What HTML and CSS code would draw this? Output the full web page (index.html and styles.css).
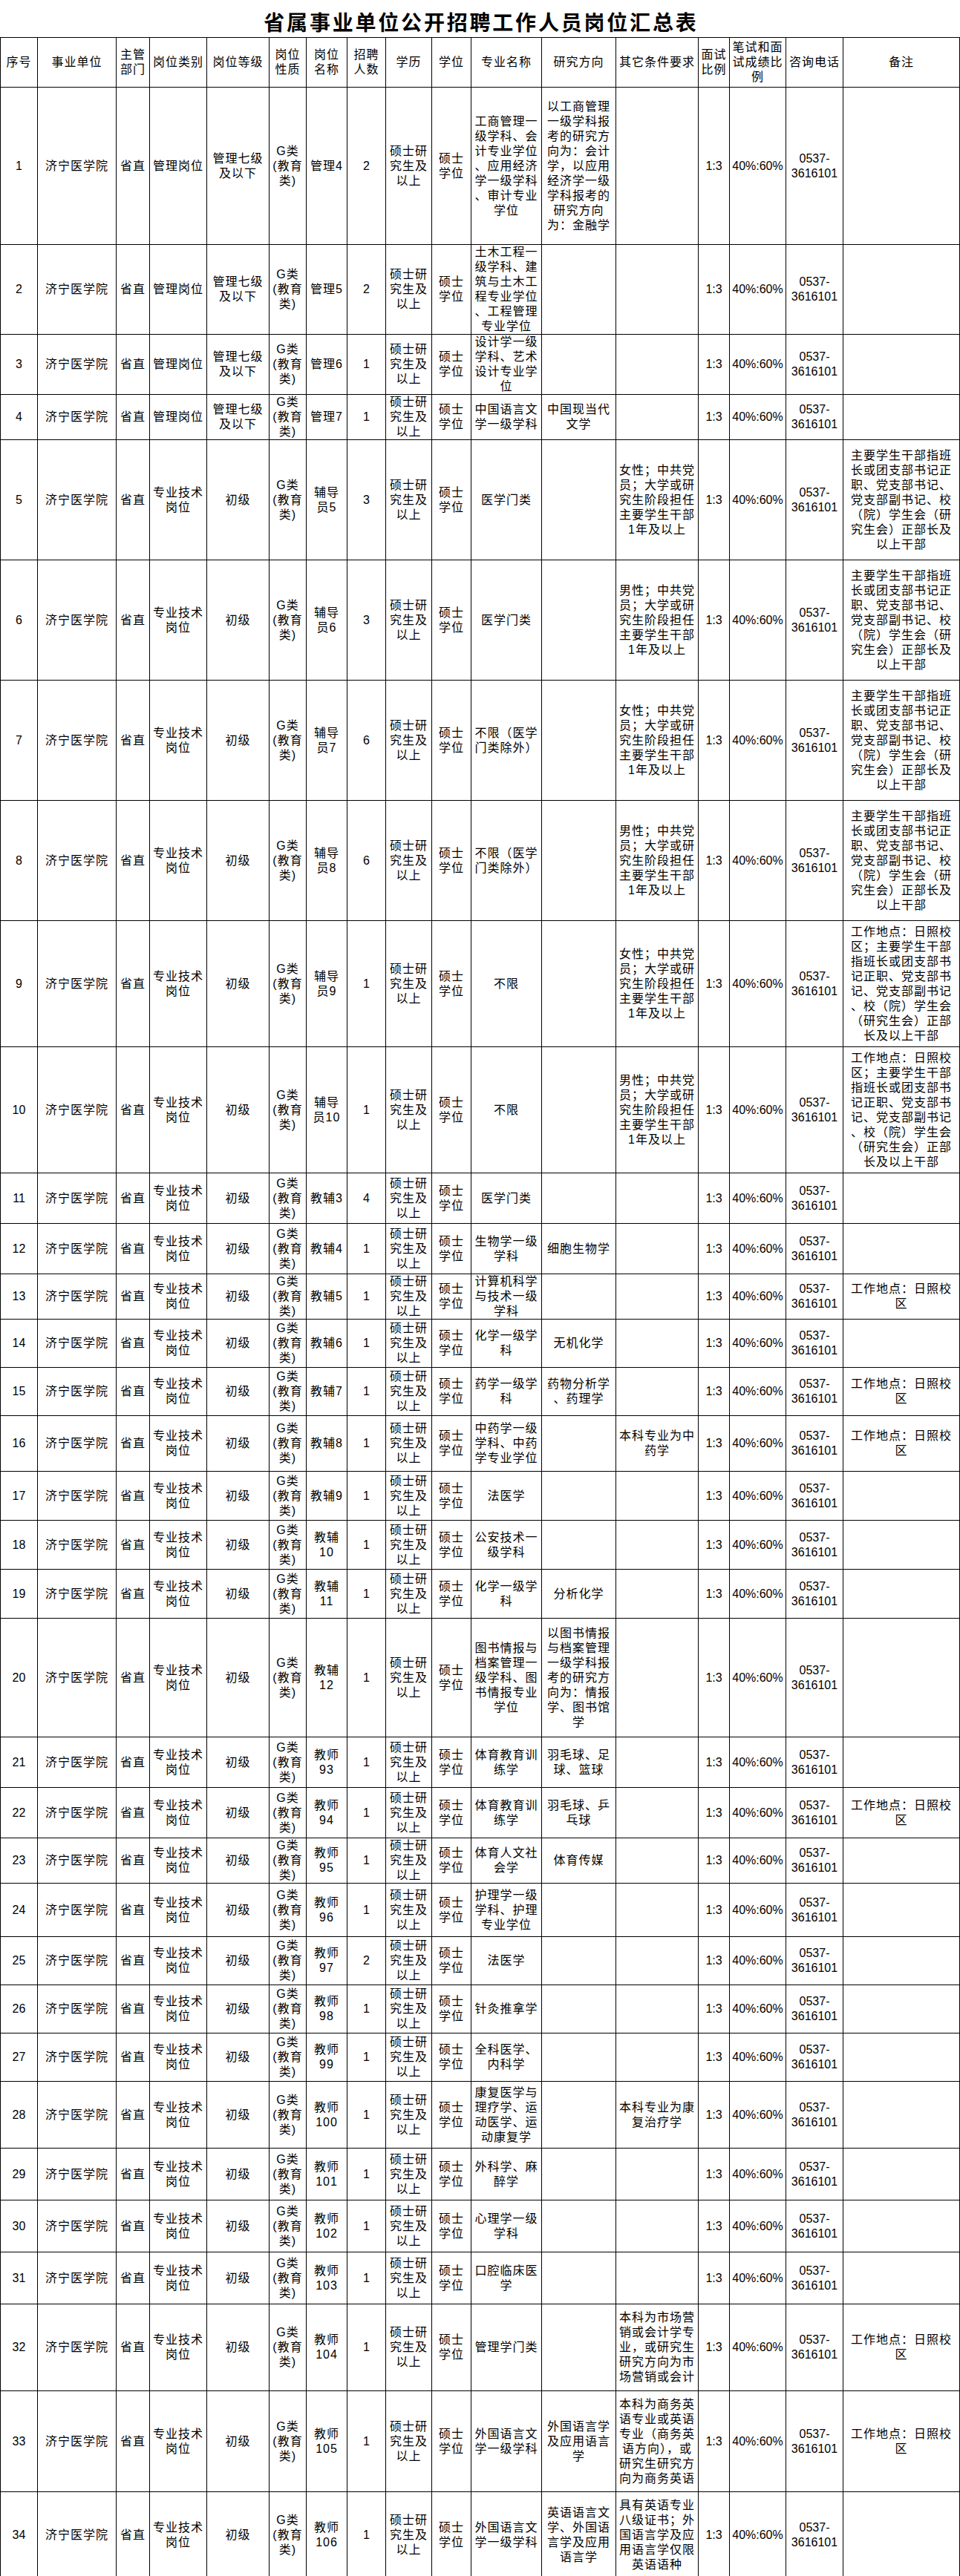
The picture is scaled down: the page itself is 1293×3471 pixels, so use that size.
FILE: index.html
```html
<!DOCTYPE html>
<html lang="zh-CN">
<head>
<meta charset="utf-8">
<title>省属事业单位公开招聘工作人员岗位汇总表</title>
<link rel="stylesheet" href="styles.css">
</head>
<body>
<div class="title">省属事业单位公开招聘工作人员岗位汇总表</div>
<table class="sheet">
<colgroup>
<col class="w1"><col class="w2"><col class="w3"><col class="w4"><col class="w5"><col class="w6"><col class="w7"><col class="w8"><col class="w9"><col class="w10"><col class="w11"><col class="w12"><col class="w13"><col class="w14"><col class="w15"><col class="w16"><col class="w17">
</colgroup>
<thead>
<tr class="h67"><th>序号</th><th>事业单位</th><th>主管部门</th><th>岗位类别</th><th>岗位等级</th><th>岗位性质</th><th>岗位名称</th><th>招聘人数</th><th>学历</th><th>学位</th><th>专业名称</th><th>研究方向</th><th>其它条件要求</th><th>面试比例</th><th>笔试和面试成绩比例</th><th>咨询电话</th><th>备注</th></tr>
</thead>
<tbody>
<tr class="h212"><td class="num">1</td><td>济宁医学院</td><td>省直</td><td>管理岗位</td><td>管理七级及以下</td><td>G类(教育类)</td><td>管理4</td><td class="num">2</td><td>硕士研究生及以上</td><td>硕士学位</td><td class="tx">工商管理一级学科、会计专业学位、应用经济学一级学科、审计专业学位</td><td class="tx">以工商管理一级学科报考的研究方向为：会计学，以应用经济学一级学科报考的研究方向<br>为：金融学</td><td class="tx"></td><td class="num">1:3</td><td class="num">40%:60%</td><td class="num">0537-<br>3616101</td><td class="tx"></td></tr>
<tr class="h120"><td class="num">2</td><td>济宁医学院</td><td>省直</td><td>管理岗位</td><td>管理七级及以下</td><td>G类(教育类)</td><td>管理5</td><td class="num">2</td><td>硕士研究生及以上</td><td>硕士学位</td><td class="tx">土木工程一级学科、建筑与土木工程专业学位、工程管理专业学位</td><td class="tx"></td><td class="tx"></td><td class="num">1:3</td><td class="num">40%:60%</td><td class="num">0537-<br>3616101</td><td class="tx"></td></tr>
<tr class="h80"><td class="num">3</td><td>济宁医学院</td><td>省直</td><td>管理岗位</td><td>管理七级及以下</td><td>G类(教育类)</td><td>管理6</td><td class="num">1</td><td>硕士研究生及以上</td><td>硕士学位</td><td class="tx">设计学一级学科、艺术设计专业学位</td><td class="tx"></td><td class="tx"></td><td class="num">1:3</td><td class="num">40%:60%</td><td class="num">0537-<br>3616101</td><td class="tx"></td></tr>
<tr class="h61"><td class="num">4</td><td>济宁医学院</td><td>省直</td><td>管理岗位</td><td>管理七级及以下</td><td>G类(教育类)</td><td>管理7</td><td class="num">1</td><td>硕士研究生及以上</td><td>硕士学位</td><td class="tx">中国语言文学一级学科</td><td class="tx">中国现当代文学</td><td class="tx"></td><td class="num">1:3</td><td class="num">40%:60%</td><td class="num">0537-<br>3616101</td><td class="tx"></td></tr>
<tr class="h162"><td class="num">5</td><td>济宁医学院</td><td>省直</td><td>专业技术岗位</td><td>初级</td><td>G类(教育类)</td><td>辅导员5</td><td class="num">3</td><td>硕士研究生及以上</td><td>硕士学位</td><td class="tx">医学门类</td><td class="tx"></td><td class="tx">女性；中共党员；大学或研究生阶段担任主要学生干部1年及以上</td><td class="num">1:3</td><td class="num">40%:60%</td><td class="num">0537-<br>3616101</td><td class="tx">主要学生干部指班长或团支部书记正职、党支部书记、党支部副书记、校（院）学生会（研究生会）正部长及以上干部</td></tr>
<tr class="h162"><td class="num">6</td><td>济宁医学院</td><td>省直</td><td>专业技术岗位</td><td>初级</td><td>G类(教育类)</td><td>辅导员6</td><td class="num">3</td><td>硕士研究生及以上</td><td>硕士学位</td><td class="tx">医学门类</td><td class="tx"></td><td class="tx">男性；中共党员；大学或研究生阶段担任主要学生干部1年及以上</td><td class="num">1:3</td><td class="num">40%:60%</td><td class="num">0537-<br>3616101</td><td class="tx">主要学生干部指班长或团支部书记正职、党支部书记、党支部副书记、校（院）学生会（研究生会）正部长及以上干部</td></tr>
<tr class="h162"><td class="num">7</td><td>济宁医学院</td><td>省直</td><td>专业技术岗位</td><td>初级</td><td>G类(教育类)</td><td>辅导员7</td><td class="num">6</td><td>硕士研究生及以上</td><td>硕士学位</td><td class="tx">不限（医学门类除外）</td><td class="tx"></td><td class="tx">女性；中共党员；大学或研究生阶段担任主要学生干部1年及以上</td><td class="num">1:3</td><td class="num">40%:60%</td><td class="num">0537-<br>3616101</td><td class="tx">主要学生干部指班长或团支部书记正职、党支部书记、党支部副书记、校（院）学生会（研究生会）正部长及以上干部</td></tr>
<tr class="h162"><td class="num">8</td><td>济宁医学院</td><td>省直</td><td>专业技术岗位</td><td>初级</td><td>G类(教育类)</td><td>辅导员8</td><td class="num">6</td><td>硕士研究生及以上</td><td>硕士学位</td><td class="tx">不限（医学门类除外）</td><td class="tx"></td><td class="tx">男性；中共党员；大学或研究生阶段担任主要学生干部1年及以上</td><td class="num">1:3</td><td class="num">40%:60%</td><td class="num">0537-<br>3616101</td><td class="tx">主要学生干部指班长或团支部书记正职、党支部书记、党支部副书记、校（院）学生会（研究生会）正部长及以上干部</td></tr>
<tr class="h170"><td class="num">9</td><td>济宁医学院</td><td>省直</td><td>专业技术岗位</td><td>初级</td><td>G类(教育类)</td><td>辅导员9</td><td class="num">1</td><td>硕士研究生及以上</td><td>硕士学位</td><td class="tx">不限</td><td class="tx"></td><td class="tx">女性；中共党员；大学或研究生阶段担任主要学生干部1年及以上</td><td class="num">1:3</td><td class="num">40%:60%</td><td class="num">0537-<br>3616101</td><td class="tx">工作地点：日照校区；主要学生干部指班长或团支部书记正职、党支部书记、党支部副书记、校（院）学生会（研究生会）正部长及以上干部</td></tr>
<tr class="h170"><td class="num">10</td><td>济宁医学院</td><td>省直</td><td>专业技术岗位</td><td>初级</td><td>G类(教育类)</td><td>辅导员10</td><td class="num">1</td><td>硕士研究生及以上</td><td>硕士学位</td><td class="tx">不限</td><td class="tx"></td><td class="tx">男性；中共党员；大学或研究生阶段担任主要学生干部1年及以上</td><td class="num">1:3</td><td class="num">40%:60%</td><td class="num">0537-<br>3616101</td><td class="tx">工作地点：日照校区；主要学生干部指班长或团支部书记正职、党支部书记、党支部副书记、校（院）学生会（研究生会）正部长及以上干部</td></tr>
<tr class="h68"><td class="num">11</td><td>济宁医学院</td><td>省直</td><td>专业技术岗位</td><td>初级</td><td>G类(教育类)</td><td>教辅3</td><td class="num">4</td><td>硕士研究生及以上</td><td>硕士学位</td><td class="tx">医学门类</td><td class="tx"></td><td class="tx"></td><td class="num">1:3</td><td class="num">40%:60%</td><td class="num">0537-<br>3616101</td><td class="tx"></td></tr>
<tr class="h68"><td class="num">12</td><td>济宁医学院</td><td>省直</td><td>专业技术岗位</td><td>初级</td><td>G类(教育类)</td><td>教辅4</td><td class="num">1</td><td>硕士研究生及以上</td><td>硕士学位</td><td class="tx">生物学一级学科</td><td class="tx">细胞生物学</td><td class="tx"></td><td class="num">1:3</td><td class="num">40%:60%</td><td class="num">0537-<br>3616101</td><td class="tx"></td></tr>
<tr class="h60"><td class="num">13</td><td>济宁医学院</td><td>省直</td><td>专业技术岗位</td><td>初级</td><td>G类(教育类)</td><td>教辅5</td><td class="num">1</td><td>硕士研究生及以上</td><td>硕士学位</td><td class="tx">计算机科学与技术一级学科</td><td class="tx"></td><td class="tx"></td><td class="num">1:3</td><td class="num">40%:60%</td><td class="num">0537-<br>3616101</td><td class="tx">工作地点：日照校区</td></tr>
<tr class="h65"><td class="num">14</td><td>济宁医学院</td><td>省直</td><td>专业技术岗位</td><td>初级</td><td>G类(教育类)</td><td>教辅6</td><td class="num">1</td><td>硕士研究生及以上</td><td>硕士学位</td><td class="tx">化学一级学科</td><td class="tx">无机化学</td><td class="tx"></td><td class="num">1:3</td><td class="num">40%:60%</td><td class="num">0537-<br>3616101</td><td class="tx"></td></tr>
<tr class="h65"><td class="num">15</td><td>济宁医学院</td><td>省直</td><td>专业技术岗位</td><td>初级</td><td>G类(教育类)</td><td>教辅7</td><td class="num">1</td><td>硕士研究生及以上</td><td>硕士学位</td><td class="tx">药学一级学科</td><td class="tx">药物分析学、药理学</td><td class="tx"></td><td class="num">1:3</td><td class="num">40%:60%</td><td class="num">0537-<br>3616101</td><td class="tx">工作地点：日照校区</td></tr>
<tr class="h75"><td class="num">16</td><td>济宁医学院</td><td>省直</td><td>专业技术岗位</td><td>初级</td><td>G类(教育类)</td><td>教辅8</td><td class="num">1</td><td>硕士研究生及以上</td><td>硕士学位</td><td class="tx">中药学一级学科、中药学专业学位</td><td class="tx"></td><td class="tx">本科专业为中药学</td><td class="num">1:3</td><td class="num">40%:60%</td><td class="num">0537-<br>3616101</td><td class="tx">工作地点：日照校区</td></tr>
<tr class="h66"><td class="num">17</td><td>济宁医学院</td><td>省直</td><td>专业技术岗位</td><td>初级</td><td>G类(教育类)</td><td>教辅9</td><td class="num">1</td><td>硕士研究生及以上</td><td>硕士学位</td><td class="tx">法医学</td><td class="tx"></td><td class="tx"></td><td class="num">1:3</td><td class="num">40%:60%</td><td class="num">0537-<br>3616101</td><td class="tx"></td></tr>
<tr class="h66"><td class="num">18</td><td>济宁医学院</td><td>省直</td><td>专业技术岗位</td><td>初级</td><td>G类(教育类)</td><td>教辅10</td><td class="num">1</td><td>硕士研究生及以上</td><td>硕士学位</td><td class="tx">公安技术一级学科</td><td class="tx"></td><td class="tx"></td><td class="num">1:3</td><td class="num">40%:60%</td><td class="num">0537-<br>3616101</td><td class="tx"></td></tr>
<tr class="h66"><td class="num">19</td><td>济宁医学院</td><td>省直</td><td>专业技术岗位</td><td>初级</td><td>G类(教育类)</td><td>教辅11</td><td class="num">1</td><td>硕士研究生及以上</td><td>硕士学位</td><td class="tx">化学一级学科</td><td class="tx">分析化学</td><td class="tx"></td><td class="num">1:3</td><td class="num">40%:60%</td><td class="num">0537-<br>3616101</td><td class="tx"></td></tr>
<tr class="h160"><td class="num">20</td><td>济宁医学院</td><td>省直</td><td>专业技术岗位</td><td>初级</td><td>G类(教育类)</td><td>教辅12</td><td class="num">1</td><td>硕士研究生及以上</td><td>硕士学位</td><td class="tx">图书情报与档案管理一级学科、图书情报专业学位</td><td class="tx">以图书情报与档案管理一级学科报考的研究方向为：情报学、图书馆学</td><td class="tx"></td><td class="num">1:3</td><td class="num">40%:60%</td><td class="num">0537-<br>3616101</td><td class="tx"></td></tr>
<tr class="h68"><td class="num">21</td><td>济宁医学院</td><td>省直</td><td>专业技术岗位</td><td>初级</td><td>G类(教育类)</td><td>教师93</td><td class="num">1</td><td>硕士研究生及以上</td><td>硕士学位</td><td class="tx">体育教育训练学</td><td class="tx">羽毛球、足球、篮球</td><td class="tx"></td><td class="num">1:3</td><td class="num">40%:60%</td><td class="num">0537-<br>3616101</td><td class="tx"></td></tr>
<tr class="h68"><td class="num">22</td><td>济宁医学院</td><td>省直</td><td>专业技术岗位</td><td>初级</td><td>G类(教育类)</td><td>教师94</td><td class="num">1</td><td>硕士研究生及以上</td><td>硕士学位</td><td class="tx">体育教育训练学</td><td class="tx">羽毛球、乒乓球</td><td class="tx"></td><td class="num">1:3</td><td class="num">40%:60%</td><td class="num">0537-<br>3616101</td><td class="tx">工作地点：日照校区</td></tr>
<tr class="h60"><td class="num">23</td><td>济宁医学院</td><td>省直</td><td>专业技术岗位</td><td>初级</td><td>G类(教育类)</td><td>教师95</td><td class="num">1</td><td>硕士研究生及以上</td><td>硕士学位</td><td class="tx">体育人文社会学</td><td class="tx">体育传媒</td><td class="tx"></td><td class="num">1:3</td><td class="num">40%:60%</td><td class="num">0537-<br>3616101</td><td class="tx"></td></tr>
<tr class="h72"><td class="num">24</td><td>济宁医学院</td><td>省直</td><td>专业技术岗位</td><td>初级</td><td>G类(教育类)</td><td>教师96</td><td class="num">1</td><td>硕士研究生及以上</td><td>硕士学位</td><td class="tx">护理学一级学科、护理专业学位</td><td class="tx"></td><td class="tx"></td><td class="num">1:3</td><td class="num">40%:60%</td><td class="num">0537-<br>3616101</td><td class="tx"></td></tr>
<tr class="h65"><td class="num">25</td><td>济宁医学院</td><td>省直</td><td>专业技术岗位</td><td>初级</td><td>G类(教育类)</td><td>教师97</td><td class="num">2</td><td>硕士研究生及以上</td><td>硕士学位</td><td class="tx">法医学</td><td class="tx"></td><td class="tx"></td><td class="num">1:3</td><td class="num">40%:60%</td><td class="num">0537-<br>3616101</td><td class="tx"></td></tr>
<tr class="h65"><td class="num">26</td><td>济宁医学院</td><td>省直</td><td>专业技术岗位</td><td>初级</td><td>G类(教育类)</td><td>教师98</td><td class="num">1</td><td>硕士研究生及以上</td><td>硕士学位</td><td class="tx">针灸推拿学</td><td class="tx"></td><td class="tx"></td><td class="num">1:3</td><td class="num">40%:60%</td><td class="num">0537-<br>3616101</td><td class="tx"></td></tr>
<tr class="h65"><td class="num">27</td><td>济宁医学院</td><td>省直</td><td>专业技术岗位</td><td>初级</td><td>G类(教育类)</td><td>教师99</td><td class="num">1</td><td>硕士研究生及以上</td><td>硕士学位</td><td class="tx">全科医学、内科学</td><td class="tx"></td><td class="tx"></td><td class="num">1:3</td><td class="num">40%:60%</td><td class="num">0537-<br>3616101</td><td class="tx"></td></tr>
<tr class="h90"><td class="num">28</td><td>济宁医学院</td><td>省直</td><td>专业技术岗位</td><td>初级</td><td>G类(教育类)</td><td>教师100</td><td class="num">1</td><td>硕士研究生及以上</td><td>硕士学位</td><td class="tx">康复医学与理疗学、运动医学、运动康复学</td><td class="tx"></td><td class="tx">本科专业为康复治疗学</td><td class="num">1:3</td><td class="num">40%:60%</td><td class="num">0537-<br>3616101</td><td class="tx"></td></tr>
<tr class="h70"><td class="num">29</td><td>济宁医学院</td><td>省直</td><td>专业技术岗位</td><td>初级</td><td>G类(教育类)</td><td>教师101</td><td class="num">1</td><td>硕士研究生及以上</td><td>硕士学位</td><td class="tx">外科学、麻醉学</td><td class="tx"></td><td class="tx"></td><td class="num">1:3</td><td class="num">40%:60%</td><td class="num">0537-<br>3616101</td><td class="tx"></td></tr>
<tr class="h70"><td class="num">30</td><td>济宁医学院</td><td>省直</td><td>专业技术岗位</td><td>初级</td><td>G类(教育类)</td><td>教师102</td><td class="num">1</td><td>硕士研究生及以上</td><td>硕士学位</td><td class="tx">心理学一级学科</td><td class="tx"></td><td class="tx"></td><td class="num">1:3</td><td class="num">40%:60%</td><td class="num">0537-<br>3616101</td><td class="tx"></td></tr>
<tr class="h70"><td class="num">31</td><td>济宁医学院</td><td>省直</td><td>专业技术岗位</td><td>初级</td><td>G类(教育类)</td><td>教师103</td><td class="num">1</td><td>硕士研究生及以上</td><td>硕士学位</td><td class="tx">口腔临床医学</td><td class="tx"></td><td class="tx"></td><td class="num">1:3</td><td class="num">40%:60%</td><td class="num">0537-<br>3616101</td><td class="tx"></td></tr>
<tr class="h117"><td class="num">32</td><td>济宁医学院</td><td>省直</td><td>专业技术岗位</td><td>初级</td><td>G类(教育类)</td><td>教师104</td><td class="num">1</td><td>硕士研究生及以上</td><td>硕士学位</td><td class="tx">管理学门类</td><td class="tx"></td><td class="tx">本科为市场营销或会计学专业，或研究生研究方向为市场营销或会计</td><td class="num">1:3</td><td class="num">40%:60%</td><td class="num">0537-<br>3616101</td><td class="tx">工作地点：日照校区</td></tr>
<tr class="h136"><td class="num">33</td><td>济宁医学院</td><td>省直</td><td>专业技术岗位</td><td>初级</td><td>G类(教育类)</td><td>教师105</td><td class="num">1</td><td>硕士研究生及以上</td><td>硕士学位</td><td class="tx">外国语言文学一级学科</td><td class="tx">外国语言学及应用语言学</td><td class="tx">本科为商务英语专业或英语专业（商务英语方向），或研究生研究方向为商务英语</td><td class="num">1:3</td><td class="num">40%:60%</td><td class="num">0537-<br>3616101</td><td class="tx">工作地点：日照校区</td></tr>
<tr class="h117"><td class="num">34</td><td>济宁医学院</td><td>省直</td><td>专业技术岗位</td><td>初级</td><td>G类(教育类)</td><td>教师106</td><td class="num">1</td><td>硕士研究生及以上</td><td>硕士学位</td><td class="tx">外国语言文学一级学科</td><td class="tx">英语语言文学、外国语言学及应用语言学</td><td class="tx">具有英语专业八级证书；外国语言学及应用语言学仅限英语语种</td><td class="num">1:3</td><td class="num">40%:60%</td><td class="num">0537-<br>3616101</td><td class="tx"></td></tr>
</tbody>
</table>
</body>
</html>
```

FILE: styles.css
```css
html, body {
  margin: 0;
  padding: 0;
  background: #ffffff;
  color: #000000;
}

body {
  font-family: "Liberation Sans", "Noto Sans CJK SC", sans-serif;
}

.title {
  height: 50px;
  box-sizing: border-box;
  padding-top: 11px;
  text-align: center;
  font-family: "Noto Sans CJK SC", sans-serif;
  font-size: 28px;
  font-weight: 700;
  line-height: 36px;
  letter-spacing: 2.8px;
  text-indent: 2.8px;
}

.sheet {
  width: 1292px;
  table-layout: fixed;
  border-collapse: collapse;
  font-size: 16px;
  line-height: 20px;
  letter-spacing: 1px;
}

.sheet th,
.sheet td {
  border: 1px solid #000000;
  padding: 0 3px;
  text-align: center;
  vertical-align: middle;
  font-weight: 400;
  overflow: hidden;
}

.sheet td.num {
  letter-spacing: 0;
  padding: 0 1px;
}

.sheet td.tx {
  line-break: anywhere;
}

/* column widths */
.w1 { width: 50px; }
.w2 { width: 106px; }
.w3 { width: 45px; }
.w4 { width: 77px; }
.w5 { width: 84px; }
.w6 { width: 50px; }
.w7 { width: 55px; }
.w8 { width: 52px; }
.w9 { width: 62px; }
.w10 { width: 53px; }
.w11 { width: 95px; }
.w12 { width: 100px; }
.w13 { width: 111px; }
.w14 { width: 42px; }
.w15 { width: 76px; }
.w16 { width: 77px; }
.w17 { width: 157px; }

/* row heights */
.h60 { height: 60px; }
.h61 { height: 61px; }
.h65 { height: 65px; }
.h66 { height: 66px; }
.h67 { height: 67px; }
.h68 { height: 68px; }
.h70 { height: 70px; }
.h72 { height: 72px; }
.h75 { height: 75px; }
.h80 { height: 80px; }
.h90 { height: 90px; }
.h117 { height: 117px; }
.h120 { height: 120px; }
.h136 { height: 136px; }
.h160 { height: 160px; }
.h162 { height: 162px; }
.h170 { height: 170px; }
.h212 { height: 212px; }
```
